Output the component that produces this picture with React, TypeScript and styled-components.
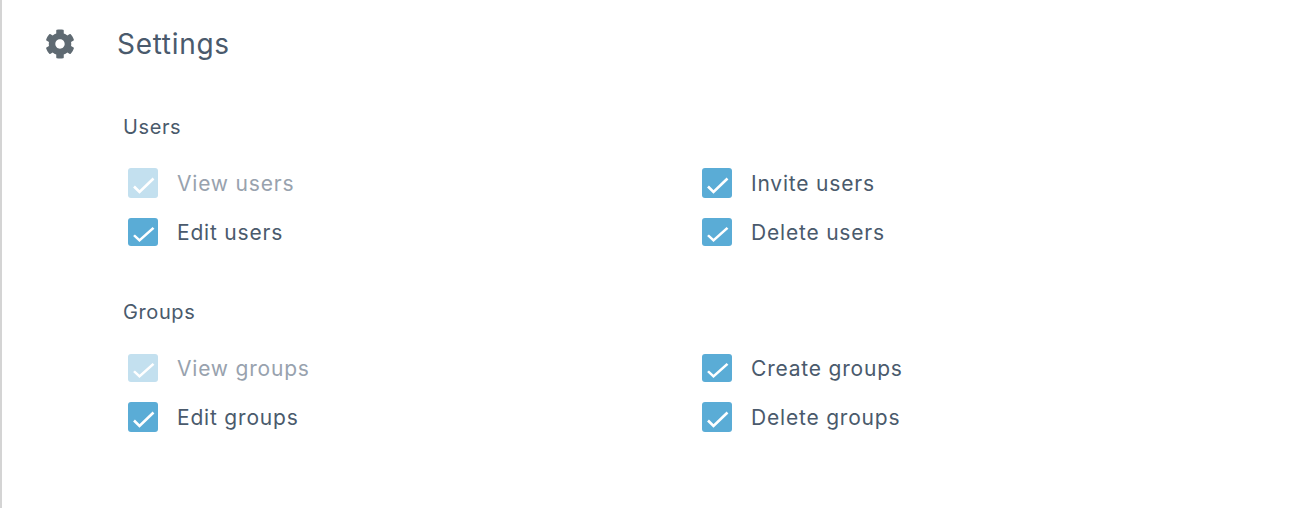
import styled, { createGlobalStyle } from 'styled-components';
import { FaCog } from 'react-icons/fa';

const GlobalStyle = createGlobalStyle`
  html, body {
    margin: 0;
    padding: 0;
    background: #fff;
    font-family: Inter, "Liberation Sans", sans-serif;
    color: #4a5a6c;
  }
`;

const Page = styled.div`
  height: 508px;
  box-sizing: border-box;
  border-left: 2px solid #d4d4d4;
  overflow: hidden;
`;

const Header = styled.header`
  display: flex;
  align-items: center;
  height: 30px;
  padding: 29px 0 0 43px;
`;

const Gear = styled(FaCog)`
  width: 30px;
  height: 30px;
  flex: none;
  color: #5f6a72;
`;

const Title = styled.h1`
  margin: 0 0 0 42px;
  font-size: 28px;
  font-weight: 400;
  line-height: 30px;
  letter-spacing: 0.7px;
`;

const Content = styled.div`
  padding: 55px 0 0 122px;
`;

const Section = styled.section`
  margin-bottom: 33px;
`;

const SectionTitle = styled.h2`
  margin: 0 0 0 -1px;
  height: 26px;
  font-size: 20px;
  font-weight: 400;
  line-height: 26px;
  letter-spacing: 0.6px;
`;

const PermissionGrid = styled.div`
  display: grid;
  grid-template-columns: 574px 574px;
  grid-auto-rows: 49px;
  margin-top: 28px;
`;

const Permission = styled.label<{ $disabled?: boolean }>`
  display: flex;
  align-items: center;
  height: 30px;
  padding-left: 4px;
  font-size: 21px;
  letter-spacing: 0.8px;
  color: ${(p) => (p.$disabled ? '#98a2ae' : '#4a5a6c')};
`;

const Box = styled.span<{ $disabled?: boolean; $short?: boolean }>`
  display: block;
  flex: none;
  width: 30px;
  height: ${(p) => (p.$short ? 28 : 30)}px;
  margin-right: 19px;
  border-radius: 3px;
  background: ${(p) => (p.$disabled ? '#c3e0ef' : '#5aacd6')};
`;

const Check = styled.svg`
  display: block;
  width: 100%;
  height: 100%;
  fill: none;
  stroke: #fff;
  stroke-width: 2.6;
`;

const groups = [
  {
    title: 'Users',
    items: [
      { label: 'View users', disabled: true },
      { label: 'Invite users' },
      { label: 'Edit users', short: true },
      { label: 'Delete users', short: true },
    ],
  },
  {
    title: 'Groups',
    items: [
      { label: 'View groups', disabled: true, short: true },
      { label: 'Create groups', short: true },
      { label: 'Edit groups' },
      { label: 'Delete groups' },
    ],
  },
];

export default function App() {
  return (
    <Page>
      <GlobalStyle />
      <Header>
        <Gear />
        <Title>Settings</Title>
      </Header>
      <Content>
        {groups.map((group) => (
          <Section key={group.title}>
            <SectionTitle>{group.title}</SectionTitle>
            <PermissionGrid>
              {group.items.map((item) => (
                <Permission key={item.label} $disabled={item.disabled}>
                  <Box $disabled={item.disabled} $short={item.short}>
                    <Check viewBox="0 0 30 30" preserveAspectRatio="none">
                      <path d="M6 18.5l5.5 5.5L25.5 10.5" />
                    </Check>
                  </Box>
                  {item.label}
                </Permission>
              ))}
            </PermissionGrid>
          </Section>
        ))}
      </Content>
    </Page>
  );
}
